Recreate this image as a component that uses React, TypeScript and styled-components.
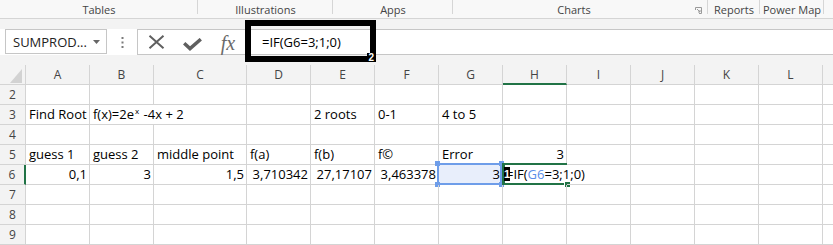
import React from "react";
import styled, { createGlobalStyle } from "styled-components";

const GlobalStyle = createGlobalStyle`
  html, body {
    margin: 0;
    padding: 0;
    background: #fff;
  }
  body {
    overflow: hidden;
    font-family: "Open Sans", "Liberation Sans", sans-serif;
  }
`;

const Page = styled.div`
  position: relative;
  width: 833px;
  height: 245px;
  overflow: hidden;
  background: #fff;
`;

/* ---------- ribbon group labels ---------- */

const Ribbon = styled.div`
  display: flex;
  height: 19px;
  box-sizing: border-box;
  background: #f8f8f8;
  border-bottom: 1px solid #d5d5d5;
  font-size: 11px;
  color: #444;
`;

const Group = styled.div<{ $w: number }>`
  flex: none;
  width: ${(p) => p.$w}px;
  display: flex;
  align-items: center;
  padding-top: 2px;
  box-sizing: border-box;
  background: linear-gradient(#d6d6d6, #d6d6d6) right top / 1px 14px no-repeat;
`;

const GroupLabel = styled.span`
  flex: 1;
  text-align: center;
  line-height: 16px;
  white-space: nowrap;
`;

const Launcher = styled.svg`
  flex: none;
  width: 7px;
  height: 7px;
  margin: 1px 6px 0 0;
`;

const Band = styled.div`
  height: 10px;
  background: #f3f3f3;
`;

/* ---------- formula bar ---------- */

const FormulaRow = styled.div`
  display: flex;
  align-items: flex-start;
  height: 26px;
  background: #fff;
`;

const NameBox = styled.div`
  flex: none;
  margin-left: 5px;
  width: 102px;
  height: 25px;
  box-sizing: border-box;
  border: 1px solid #c6c6c6;
  display: flex;
  align-items: center;
  padding: 0 6px 0 7px;
  font-size: 13px;
  color: #222;
`;

const NameText = styled.span`
  flex: 1;
  white-space: nowrap;
`;

const Grip = styled.div`
  flex: none;
  width: 30px;
  height: 26px;
  display: flex;
  align-items: center;
  justify-content: center;
`;

const FormulaBox = styled.div`
  flex: 1;
  height: 26px;
  box-sizing: border-box;
  border: 1px solid #c6c6c6;
  border-right: none;
  display: flex;
  align-items: center;
`;

const ToolButton = styled.div`
  flex: none;
  width: 36px;
  height: 24px;
  display: flex;
  align-items: center;
  justify-content: center;
  color: #5f5f5f;
`;

const FxLabel = styled.span`
  font-family: "Liberation Serif", serif;
  font-style: italic;
  font-size: 20px;
  line-height: 20px;
  color: #6a6a6a;
  margin-top: 1px;
`;

const FormulaText = styled.div`
  padding-left: 16px;
  font-size: 13px;
  color: #000;
  white-space: nowrap;
`;

const KeyFrame = styled.div`
  position: absolute;
  left: 245px;
  top: 20px;
  width: 131px;
  height: 42px;
  box-sizing: border-box;
  border: 6px solid #000;
`;

const KeyNumber = styled.span`
  position: absolute;
  right: -5px;
  bottom: -6px;
  padding: 0 1px;
  background: #000;
  color: #fff;
  font-family: "Liberation Sans", sans-serif;
  font-weight: bold;
  font-size: 10px;
  line-height: 9px;
`;

/* ---------- sheet ---------- */

const SheetArea = styled.div`
  background: #f3f3f3;
  padding-top: 10px;
`;

const Sheet = styled.div`
  display: grid;
  grid-template-columns: 26px 64px 64px 93px repeat(10, 64px);
  grid-auto-rows: 20px;
  background: #fff;
  font-size: 13px;
  color: #000;
`;

const Corner = styled.div`
  background: #f3f3f3;
  border-right: 1px solid #d4d4d4;
  border-bottom: 1px solid #d4d4d4;
  display: flex;
  align-items: flex-end;
  justify-content: flex-end;
  padding: 0 3px 1px 0;
`;

const ColHead = styled.div<{ $active?: boolean }>`
  box-sizing: border-box;
  background: #f3f3f3;
  border-right: 1px solid #d4d4d4;
  border-bottom: ${(p) => (p.$active ? "2px solid #217346" : "1px solid #d4d4d4")};
  text-align: center;
  font-size: 12px;
  line-height: 19px;
  color: #444;
`;

const RowHead = styled.div<{ $active?: boolean }>`
  box-sizing: border-box;
  background: #f3f3f3;
  border-right: ${(p) => (p.$active ? "2px solid #217346" : "1px solid #d4d4d4")};
  border-bottom: 1px solid #d4d4d4;
  text-align: center;
  font-size: 12px;
  line-height: 19px;
  color: #444;
`;

const Cell = styled.div<{ $right?: boolean; $open?: boolean; $fill?: string }>`
  position: relative;
  box-sizing: border-box;
  border-right: ${(p) => (p.$open ? "none" : "1px solid #d4d4d4")};
  border-bottom: 1px solid #d4d4d4;
  background: ${(p) => p.$fill || "transparent"};
  padding: 0 2px 0 3px;
  line-height: 19px;
  white-space: nowrap;
  text-align: ${(p) => (p.$right ? "right" : "left")};
`;

const Sup = styled.span`
  position: relative;
  top: -5px;
  font-size: 8px;
  line-height: 0;
  margin: 0 1px;
`;

const RefBox = styled.div`
  position: absolute;
  left: -2px;
  top: -2px;
  width: 65px;
  height: 22px;
  box-sizing: border-box;
  border: 2px solid #6e9de9;
`;

const Handle = styled.span<{ $b?: boolean; $r?: boolean }>`
  position: absolute;
  width: 5px;
  height: 5px;
  background: #6e9de9;
  ${(p) => (p.$b ? "bottom: -4px;" : "top: -4px;")}
  ${(p) => (p.$r ? "right: -4px;" : "left: -4px;")}
`;

const ActiveBox = styled.div`
  position: absolute;
  left: -1px;
  top: -2px;
  width: 65px;
  height: 22px;
  box-sizing: border-box;
  border: 2px solid #217346;
  border-left-width: 3px;
  border-right: none;
`;

const FillHandle = styled.span`
  position: absolute;
  right: -3px;
  bottom: -4px;
  width: 5px;
  height: 5px;
  background: #217346;
  box-shadow: 0 0 0 1px #fff;
`;

const KeyTip = styled.span`
  position: absolute;
  left: 1px;
  top: 2px;
  width: 6px;
  height: 14px;
  background: #000;
  color: #fff;
  font-family: "Liberation Sans", sans-serif;
  font-weight: bold;
  font-size: 11px;
  line-height: 14px;
  text-align: center;
`;

const RefName = styled.span`
  color: #5b8ee8;
`;

type CellData = { v?: React.ReactNode; r?: boolean; open?: boolean; kind?: "ref" | "edit" };

const COLS = ["A", "B", "C", "D", "E", "F", "G", "H", "I", "J", "K", "L", "M"];

const ROWS: { n: number; cells: Record<string, CellData> }[] = [
  { n: 2, cells: {} },
  {
    n: 3,
    cells: {
      A: { v: "Find Root" },
      B: {
        v: (
          <>
            f(x)=2e<Sup>x</Sup> -4x + 2
          </>
        ),
        open: true,
      },
      E: { v: "2 roots" },
      F: { v: "0-1" },
      G: { v: "4 to 5" },
    },
  },
  { n: 4, cells: {} },
  {
    n: 5,
    cells: {
      A: { v: "guess 1" },
      B: { v: "guess 2" },
      C: { v: "middle point" },
      D: { v: "f(a)" },
      E: { v: "f(b)" },
      F: { v: "f©" },
      G: { v: "Error" },
      H: { v: "3", r: true },
    },
  },
  {
    n: 6,
    cells: {
      A: { v: "0,1", r: true },
      B: { v: "3", r: true },
      C: { v: "1,5", r: true },
      D: { v: "3,710342", r: true },
      E: { v: "27,17107", r: true },
      F: { v: "3,463378", r: true },
      G: { v: "3", r: true, kind: "ref" },
      H: {
        v: (
          <>
            =IF(<RefName>G6</RefName>=3;1;0)
          </>
        ),
        open: true,
        kind: "edit",
      },
    },
  },
  { n: 7, cells: {} },
  { n: 8, cells: {} },
  { n: 9, cells: {} },
];

const RIBBON = [
  { label: "Tables", w: 198 },
  { label: "Illustrations", w: 135 },
  { label: "Apps", w: 120 },
  { label: "Charts", w: 255, launcher: true },
  { label: "Reports", w: 52 },
  { label: "Power Map", w: 64 },
];

const SheetCell = ({ data }: { data?: CellData }) => {
  if (!data) return <Cell />;
  return (
    <Cell $right={data.r} $open={data.open} $fill={data.kind === "ref" ? "#e8eefb" : undefined}>
      {data.v}
      {data.kind === "ref" && (
        <RefBox>
          <Handle />
          <Handle $r />
          <Handle $b />
          <Handle $b $r />
        </RefBox>
      )}
      {data.kind === "edit" && (
        <>
          <ActiveBox>
            <FillHandle />
          </ActiveBox>
          <KeyTip>1</KeyTip>
        </>
      )}
    </Cell>
  );
};

export default function App() {
  return (
    <Page>
      <GlobalStyle />
      <Ribbon>
        {RIBBON.map((g) => (
          <Group key={g.label} $w={g.w}>
            <GroupLabel>{g.label}</GroupLabel>
            {g.launcher && (
              <Launcher viewBox="0 0 7 7">
                <path d="M0.5 3V0.5H6.5V6.5H4" fill="none" stroke="#9a9a9a" strokeWidth="1" />
                <path d="M2 2L5 5M5 3V5H3" fill="none" stroke="#9a9a9a" strokeWidth="1" />
              </Launcher>
            )}
          </Group>
        ))}
      </Ribbon>
      <Band />
      <FormulaRow>
        <NameBox>
          <NameText>SUMPROD...</NameText>
          <svg width="7" height="4" viewBox="0 0 7 4">
            <path d="M0 0H7L3.5 4Z" fill="#666" />
          </svg>
        </NameBox>
        <Grip>
          <svg width="3" height="11" viewBox="0 0 3 11">
            <rect x="0.5" y="0" width="2" height="2" fill="#7a7a7a" />
            <rect x="0.5" y="4.5" width="2" height="2" fill="#7a7a7a" />
            <rect x="0.5" y="9" width="2" height="2" fill="#7a7a7a" />
          </svg>
        </Grip>
        <FormulaBox>
          <ToolButton>
            <svg width="17" height="14" viewBox="0 0 17 14">
              <path d="M1.5 0.8L15.5 13.2M15.5 0.8L1.5 13.2" stroke="currentColor" strokeWidth="2" />
            </svg>
          </ToolButton>
          <ToolButton>
            <svg width="19" height="13" viewBox="0 0 19 13" style={{ marginTop: 5 }}>
              <path d="M1.2 5.2L7 10.6L17.8 1.2" fill="none" stroke="currentColor" strokeWidth="3.4" />
            </svg>
          </ToolButton>
          <ToolButton>
            <FxLabel>fx</FxLabel>
          </ToolButton>
          <FormulaText>=IF(G6=3;1;0)</FormulaText>
        </FormulaBox>
      </FormulaRow>
      <SheetArea>
        <Sheet>
          <Corner>
            <svg width="12" height="14" viewBox="0 0 12 14">
              <path d="M12 0V14H0Z" fill="#d2d2d2" />
            </svg>
          </Corner>
          {COLS.map((c) => (
            <ColHead key={c} $active={c === "H"}>
              {c}
            </ColHead>
          ))}
          {ROWS.map((row) => (
            <React.Fragment key={row.n}>
              <RowHead $active={row.n === 6}>{row.n}</RowHead>
              {COLS.map((c) => (
                <SheetCell key={c} data={row.cells[c]} />
              ))}
            </React.Fragment>
          ))}
        </Sheet>
      </SheetArea>
      <KeyFrame>
        <KeyNumber>2</KeyNumber>
      </KeyFrame>
    </Page>
  );
}
